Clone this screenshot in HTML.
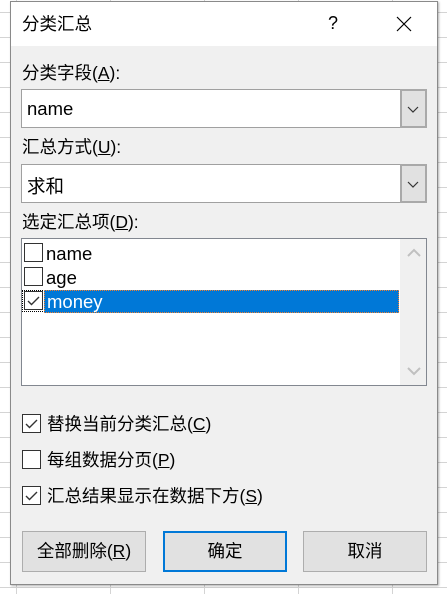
<!DOCTYPE html>
<html><head><meta charset="utf-8"><style>
*{margin:0;padding:0;box-sizing:border-box}
body{width:447px;height:594px;overflow:hidden;position:relative;background:#fff;font-family:"Liberation Sans","Noto Sans CJK SC",sans-serif;color:#000;
background-image:linear-gradient(#d4d4d4 1px,transparent 1px),linear-gradient(90deg,#d4d4d4 1px,transparent 1px);background-size:94px 25px,94px 25px;background-position:0 12px,16px 0}
.dlg{position:absolute;left:10px;top:1px;width:428px;height:584px;background:#f0f0f0;border:1px solid #8a8a8a;box-shadow:1px 1px 2px rgba(0,0,0,.3)}
.tb{position:absolute;left:0;top:0;width:426px;height:44px;background:#fff}
.a{position:absolute;font-size:17.5px;line-height:20px;white-space:nowrap}
.combo{position:absolute;left:10px;width:406px;height:39px;background:#fff;border:1px solid #a0a0a0}
.combo .b{position:absolute;right:-1px;top:-1px;width:27px;height:39px;background:#e1e1e1;border:2px solid #a9a9a9}
.combo span{position:absolute;left:5px;top:8px;font-size:18.5px}
.cb{position:absolute;width:19px;height:19px;border:1px solid #333;background:#fff}
.btn{position:absolute;top:529px;height:41px;background:#e1e1e1;border:1px solid #adadad;font-size:17.5px;text-align:center;line-height:39px}
u{text-decoration:underline}
</style></head><body>
<div class="dlg">
<div class="tb"></div>
<div class="a" style="left:11px;top:12px;font-size:17.5px">分类汇总</div>
<div class="a" style="left:317px;top:11px;font-size:18px">?</div>
<svg style="position:absolute;left:385px;top:14px" width="16" height="16"><path d="M1 1L15 15M15 1L1 15" stroke="#000" stroke-width="1.2"/></svg>
<div class="a" style="left:11px;top:61px">分类字段(<u>A</u>):</div>
<div class="combo" style="top:87px"><span>name</span><div class="b"><svg width="23" height="35"><path d="M6 16l5 5 5-5" stroke="#333" fill="none" stroke-width="1.2"/></svg></div></div>
<div class="a" style="left:11px;top:135px">汇总方式(<u>U</u>):</div>
<div class="combo" style="top:162px"><span>求和</span><div class="b"><svg width="23" height="35"><path d="M6 16l5 5 5-5" stroke="#333" fill="none" stroke-width="1.2"/></svg></div></div>
<div class="a" style="left:11px;top:210px">选定汇总项(<u>D</u>):</div>
<div style="position:absolute;left:10px;top:236px;width:406px;height:148px;background:#fff;border:1px solid #828790">
 <div style="position:absolute;right:0;top:0;width:26px;height:146px;background:#f0f0f0"></div>
 <svg style="position:absolute;right:4px;top:8px" width="16" height="12"><path d="M2 9l6-6 6 6" stroke="#c0c0c0" fill="none" stroke-width="2"/></svg>
 <svg style="position:absolute;right:4px;top:126px" width="16" height="12"><path d="M2 3l6 6 6-6" stroke="#c0c0c0" fill="none" stroke-width="2"/></svg>
 <div class="cb" style="left:2px;top:4px"></div><div class="a" style="left:24px;top:5px;font-size:18.5px">name</div>
 <div class="cb" style="left:2px;top:28px"></div><div class="a" style="left:24px;top:29px;font-size:18.5px">age</div>
 <div style="position:absolute;left:0;top:51px;width:21px;height:22px;border:1px dotted #000"></div>
 <div class="cb" style="left:2px;top:52px"><svg width="17" height="17"><path d="M3 9l3.5 3.5L14 5" stroke="#333" fill="none" stroke-width="1.4"/></svg></div>
 <div style="position:absolute;left:22px;top:51px;width:355px;height:23px;background:#0078d7;border:1px dotted #f08030"></div>
 <div class="a" style="left:25px;top:53px;font-size:18.5px;color:#fff">money</div>
</div>
<div class="cb" style="left:11px;top:412px"><svg width="17" height="17"><path d="M3 9l3.5 3.5L14 5" stroke="#333" fill="none" stroke-width="1.4"/></svg></div>
<div class="a" style="left:36px;top:412px">替换当前分类汇总(<u>C</u>)</div>
<div class="cb" style="left:11px;top:448px"></div>
<div class="a" style="left:36px;top:448px">每组数据分页(<u>P</u>)</div>
<div class="cb" style="left:11px;top:484px"><svg width="17" height="17"><path d="M3 9l3.5 3.5L14 5" stroke="#333" fill="none" stroke-width="1.4"/></svg></div>
<div class="a" style="left:36px;top:484px">汇总结果显示在数据下方(<u>S</u>)</div>
<div class="btn" style="left:11px;width:124px">全部删除(<u>R</u>)</div>
<div class="btn" style="left:152px;width:124px;border:2px solid #0078d7;line-height:37px">确定</div>
<div class="btn" style="left:292px;width:124px">取消</div>
</div>
</body></html>
